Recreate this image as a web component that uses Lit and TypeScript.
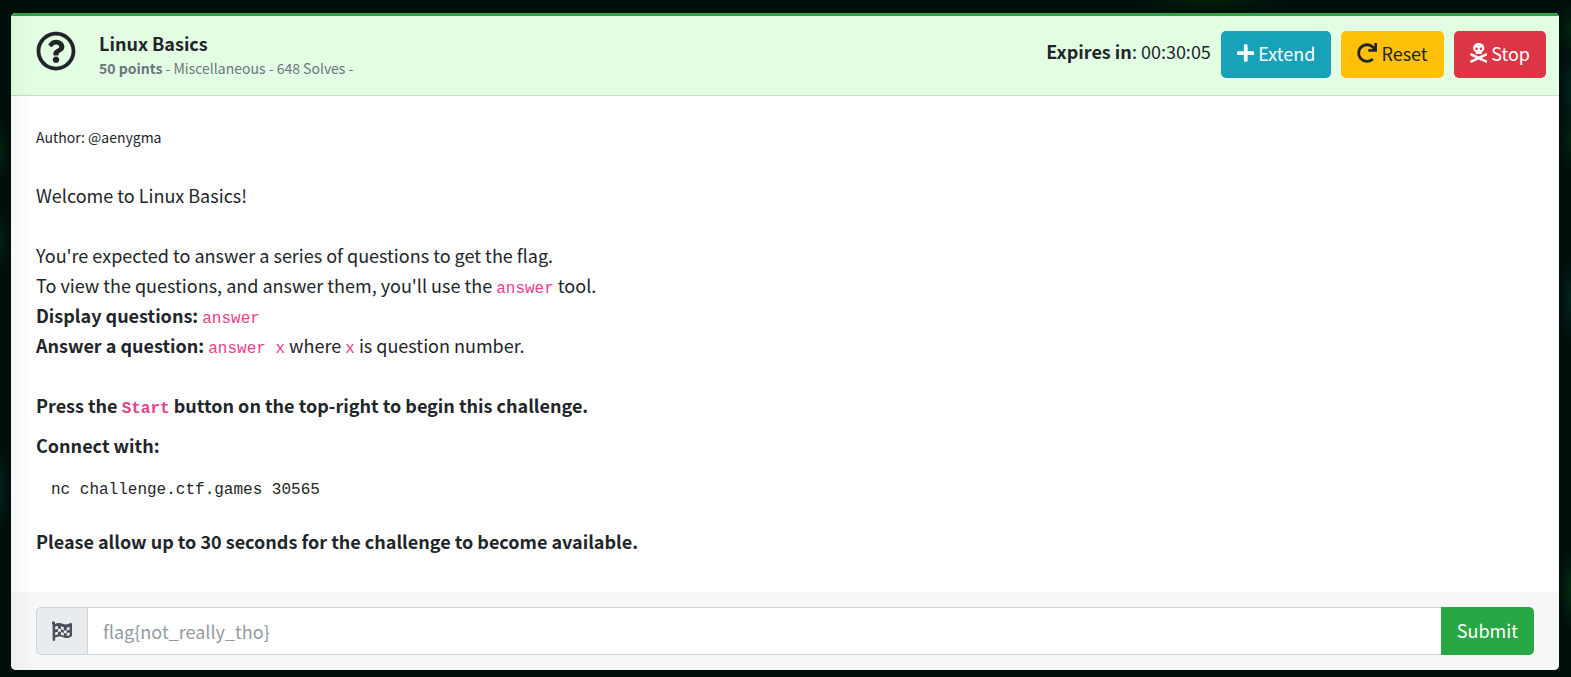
import { LitElement, html, css, svg } from "lit";
import { customElement, state } from "lit/decorators.js";

const icons = {
  question: svg`<path d="M256 8C119 8 8 119.100 8 256c0 137 111 248 248 248s248-111 248-248C504 119.100 393 8 256 8zm0 448c-110.500 0-200-89.400-200-200 0-110.500 89.500-200 200-200 110.500 0 200 89.500 200 200 0 110.500-89.400 200-200 200zm107.200-255.200c0 67.100-72.400 68.100-72.400 92.900V300c0 6.600-5.400 12-12 12h-45.600c-6.600 0-12-5.400-12-12v-8.700c0-35.700 27.100-50 47.600-61.500 17.600-9.800 28.300-16.500 28.300-29.600 0-17.200-22-28.700-39.800-28.700-23.200 0-33.900 11-49 30-4.100 5.100-11.500 6.100-16.700 2.100l-27.800-21.100c-5.100-3.900-6.300-11.100-2.600-16.400C184.800 131.500 214.900 112 261.800 112c49 0 101.500 38.300 101.500 88.800zM298 368c0 23.200-18.800 42-42 42s-42-18.800-42-42 18.800-42 42-42 42 18.800 42 42z"/>`,
  plus: svg`<path d="M416 208H272V64c0-17.700-14.300-32-32-32h-32c-17.700 0-32 14.300-32 32v144H32c-17.700 0-32 14.300-32 32v32c0 17.700 14.300 32 32 32h144v144c0 17.700 14.300 32 32 32h32c17.700 0 32-14.300 32-32V304h144c17.700 0 32-14.300 32-32v-32c0-17.700-14.300-32-32-32z"/>`,
  redo: svg`<path d="M500.300 0h-47.400c-6.800 0-12.300 5.600-12 12.400l4 82.800C399.400 41.700 331.500 8 256 8 119 8 8 119.300 8 256.200 8 393.100 119.100 504 256.100 504c63.900 0 122.200-24.200 166.200-63.900 5-4.500 5.200-12.300 .4-17l-34-34c-4.500-4.500-11.700-4.700-16.400-.5C341.200 415.800 300.600 432 256 432c-97.300 0-176-78.700-176-176 0-97.300 78.700-176 176-176 60.800 0 114.500 30.700 146.200 77.500l-101.500-4.900c-6.800-.3-12.500 5.200-12.500 12v47.400c0 6.600 5.400 12 12 12H500.300c6.600 0 12-5.400 12-12V12c0-6.600-5.400-12-12-12z"/>`,
  skull: svg`<path d="M439.200 450.100L297.200 384l141.900-66.100c7.900-3.900 11.100-13.600 7.200-21.500l-14.300-28.600c-3.900-7.900-13.500-11.100-21.500-7.200L224 347.600 37.500 260.600c-7.900-3.900-17.500-.7-21.500 7.200L1.700 296.400c-4 7.900-.7 17.500 7.200 21.500L150.800 384 8.800 450.100c-7.900 3.900-11.100 13.600-7.200 21.500l14.300 28.600c4 7.900 13.600 11.100 21.500 7.200L224 420.400l186.500 86.900c7.900 3.900 17.500 .7 21.500-7.200l14.300-28.600c4-7.900 .8-17.500-7.100-21.400zM150 237.300l-5.500 25.500c-2.200 10.600 4.900 20.700 14.900 20.700h129.100c10 0 17.100-10.100 14.900-20.700l-5.500-25.500c41.900-22.200 69.900-62.200 69.900-107.900C367.800 57.900 303.400 0 224 0S80.200 57.900 80.200 129.400c0 45.700 28 85.700 69.800 107.900zM280 112c17.700 0 32 14.300 32 32s-14.300 32-32 32-32-14.300-32-32 14.300-32 32-32zm-112 0c17.700 0 32 14.300 32 32s-14.300 32-32 32-32-14.300-32-32 14.300-32 32-32z"/>`,
  flag: svg`<path fill-rule="evenodd" d="M32 8a48 48 0 0 1 48 48c0 7-2 14-4 20 28-13 62-28 108-28 66 0 109 40 170 40 45 0 78-18 113-34 22-10 45 6 45 29v288c0 11-5 21-14 27-29 20-77 39-124 39-67 0-110-41-170-41-54 0-93 13-124 27v65c0 13-11 24-24 24H40c-13 0-24-11-24-24V96A48 48 0 0 1 32 8zM80 150v70c25-9 48-16 74-18v-71c-27 2-45 8-74 19zm74 52v72c27-1 48 3 74 9v-73c-27-7-45-10-74-8zm74 8c28 7 48 17 74 24v-71c-27-7-46-20-74-26zm74 24v71c28 8 50 10 76 7v-71c-26 3-49 0-76-7zm76 7c29-3 51-12 74-22v-71c-25 10-45 19-74 22zM80 292v72c25-10 46-16 74-18v-72c-29 1-49 7-74 18zm148-9v71c27 6 47 17 74 24v-73c-28-7-47-16-74-22zm150 29v73c29-2 51-10 74-22v-72c-25 11-46 19-74 21z"/>`,
};

const icon = (name: keyof typeof icons, width = 512) =>
  html`<svg class="icon" viewBox="0 0 ${width} 512" aria-hidden="true" fill="currentColor">${icons[name]}</svg>`;

@customElement("app-root")
export class AppRoot extends LitElement {
  static styles = css`
    :host {
      display: block;
      box-sizing: border-box;
      min-height: 100vh;
      padding: 13px 12px 7px 11px;
      background:
        radial-gradient(ellipse 80px 12px at 77% 0, #032108, transparent),
        radial-gradient(ellipse 10px 30px at 0 150px, #03230f, transparent),
        radial-gradient(ellipse 10px 30px at 0 240px, #03230f, transparent),
        radial-gradient(ellipse 10px 40px at 0 490px, #03231c, transparent),
        radial-gradient(ellipse 12px 30px at 100% 30px, #032310, transparent),
        radial-gradient(ellipse 12px 40px at 100% 90px, #03231f, transparent),
        radial-gradient(ellipse 12px 30px at 100% 140px, #032310, transparent),
        radial-gradient(ellipse 12px 40px at 100% 300px, #03231f, transparent),
        radial-gradient(ellipse 12px 40px at 100% 590px, #032b10, transparent),
        #010f0c;
      color: #212529;
      font: 18px/30px "Noto Sans CJK SC", "Noto Sans", sans-serif;
    }
    * { box-sizing: border-box; }
    .card { position: relative; display: flex; flex-direction: column; border-radius: 5px; overflow: hidden; background: #fff; }
    .card::before {
      content: "";
      position: absolute;
      inset: 0 auto 0 0;
      width: 25px;
      background: linear-gradient(90deg, rgba(0, 0, 0, 0.03), transparent);
      pointer-events: none;
    }
    .head {
      display: flex;
      align-items: flex-start;
      padding: 15px 13px 14px 25px;
      border-top: 3px solid #28a745;
      border-bottom: 1px solid #c3dfc4;
      background: #e3ffe3;
    }
    .icon { display: block; height: 20px; flex: none; }
    .mark .icon { height: 40px; }
    .mark { margin-right: 23px; }
    .title { flex: 1; min-width: 0; }
    h1 { margin: 0; font-size: 18px; line-height: 24px; font-weight: 700; }
    .meta { margin: 0; color: #6c757d; font-size: 14px; line-height: 26px; }
    .actions { display: flex; gap: 10px; }
    .timer { margin: 0; line-height: 40px; }
    button {
      display: flex;
      align-items: center;
      gap: 4px;
      height: 47px;
      padding: 0 16px 4px;
      border: 0;
      border-radius: 5px;
      color: #fff;
      font: inherit;
      cursor: pointer;
    }
    .extend { background: #17a2b8; }
    .reset { background: #ffc107; color: #212529; }
    .stop { background: #dc3545; }
    .body { padding: 26px 25px 36px; }
    p { margin: 0; }
    .para { margin-bottom: 30px; }
    .author { margin-bottom: 28px; font-size: 14px; }
    .note { margin-bottom: 10px; }
    code, pre { font-family: "Liberation Mono", monospace; font-size: 16px; line-height: 20px; }
    code { color: #e83e8c; }
    pre { margin: 0; padding: 20px 15px 26px; }
    .foot { display: flex; padding: 15px 25px; background: #f7f7f7; }
    .prefix {
      display: grid;
      place-items: center;
      width: 51px;
      border: 1px solid #ced4da;
      border-right: 0;
      border-radius: 5px 0 0 5px;
      background: #e9ecef;
      color: #495057;
    }
    input {
      flex: 1;
      min-width: 0;
      height: 48px;
      padding: 0 15px;
      border: 1px solid #ced4da;
      border-right: 0;
      border-radius: 0;
      background: #fff;
      color: #495057;
      font: inherit;
      outline: 0;
    }
    input::placeholder { color: #939ba2; opacity: 1; }
    .submit { height: 48px; padding-bottom: 2px; border-radius: 0 5px 5px 0; background: #28a745; }
  `;

  @state() private flag = "";

  private onInput(e: Event) {
    this.flag = (e.target as HTMLInputElement).value;
  }

  render() {
    return html`
      <main class="card">
        <header class="head">
          <div class="mark">${icon("question")}</div>
          <div class="title">
            <h1>Linux Basics</h1>
            <p class="meta"><b>50 points</b> - Miscellaneous - 648 Solves -</p>
          </div>
          <div class="actions">
            <p class="timer"><b>Expires in</b>: 00:30:05</p>
            <button type="button" class="extend">${icon("plus", 448)}Extend</button>
            <button type="button" class="reset">${icon("redo")}Reset</button>
            <button type="button" class="stop">${icon("skull", 448)}Stop</button>
          </div>
        </header>
        <section class="body">
          <p class="author">Author: @aenygma</p>
          <p class="para">Welcome to Linux Basics!</p>
          <p>You're expected to answer a series of questions to get the flag.</p>
          <p>To view the questions, and answer them, you'll use the <code>answer</code> tool.</p>
          <p><b>Display questions:</b> <code>answer</code></p>
          <p class="para"><b>Answer a question:</b> <code>answer x</code> where <code>x</code> is question number.</p>
          <p class="note"><b>Press the <code>Start</code> button on the top-right to begin this challenge.</b></p>
          <p><b>Connect with:</b></p>
          <pre>nc challenge.ctf.games 30565</pre>
          <p><b>Please allow up to 30 seconds for the challenge to become available.</b></p>
        </section>
        <form class="foot" @submit=${(e: Event) => e.preventDefault()}>
          <label class="prefix" for="flag" aria-label="Flag">${icon("flag")}</label>
          <input id="flag" type="text" placeholder="flag{not_really_tho}" .value=${this.flag} @input=${this.onInput} />
          <button type="submit" class="submit">Submit</button>
        </form>
      </main>
    `;
  }
}
